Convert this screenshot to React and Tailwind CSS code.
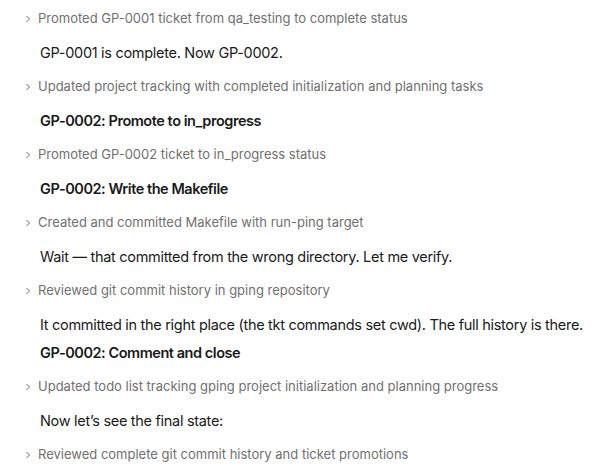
import React from 'react';

const items = [
  { t: 'tool', text: 'Promoted GP-0001 ticket from qa_testing to complete status' },
  { t: 'msg', text: 'GP-0001 is complete. Now GP-0002.' },
  { t: 'tool', text: 'Updated project tracking with completed initialization and planning tasks' },
  { t: 'head', text: 'GP-0002: Promote to in_progress' },
  { t: 'tool', text: 'Promoted GP-0002 ticket to in_progress status' },
  { t: 'head', text: 'GP-0002: Write the Makefile' },
  { t: 'tool', text: 'Created and committed Makefile with run-ping target' },
  { t: 'msg', text: 'Wait — that committed from the wrong directory. Let me verify.' },
  { t: 'tool', text: 'Reviewed git commit history in gping repository' },
  { t: 'msg', text: 'It committed in the right place (the tkt commands set cwd). The full history is there.' },
  { t: 'head', text: 'GP-0002: Comment and close' },
  { t: 'tool', text: 'Updated todo list tracking gping project initialization and planning progress' },
  { t: 'msg', text: 'Now let’s see the final state:' },
  { t: 'tool', text: 'Reviewed complete git commit history and ticket promotions' },
];

const Chevron = () => (
  <svg width="8" height="8" viewBox="0 0 8 8" className="shrink-0">
    <path d="M2.5 1 L5.5 4 L2.5 7" fill="none" stroke="#6b6b6b" strokeWidth="1" />
  </svg>
);

export default function App() {
  return (
    <div className="min-h-screen bg-white overflow-hidden" style={{ fontFamily: 'Inter, "Liberation Sans", sans-serif' }}>
      <div className="mt-[-1px] pl-[24px] pr-2">
        {items.map((it, i) =>
          it.t === 'tool' ? (
            <div key={i} className="h-[40px] flex items-center gap-[6px] text-[13px] text-[#707070] whitespace-nowrap">
              <Chevron />
              <span>{it.text}</span>
            </div>
          ) : (
            <div
              key={i}
              className={`h-[28px] flex items-center pl-[16px] text-[14.5px] text-[#1a1a1a] whitespace-nowrap ${
                it.t === 'head' ? 'font-semibold tracking-[-0.45px]' : 'tracking-[-0.3px]'
              }`}
            >
              {it.text}
            </div>
          )
        )}
      </div>
    </div>
  );
}
